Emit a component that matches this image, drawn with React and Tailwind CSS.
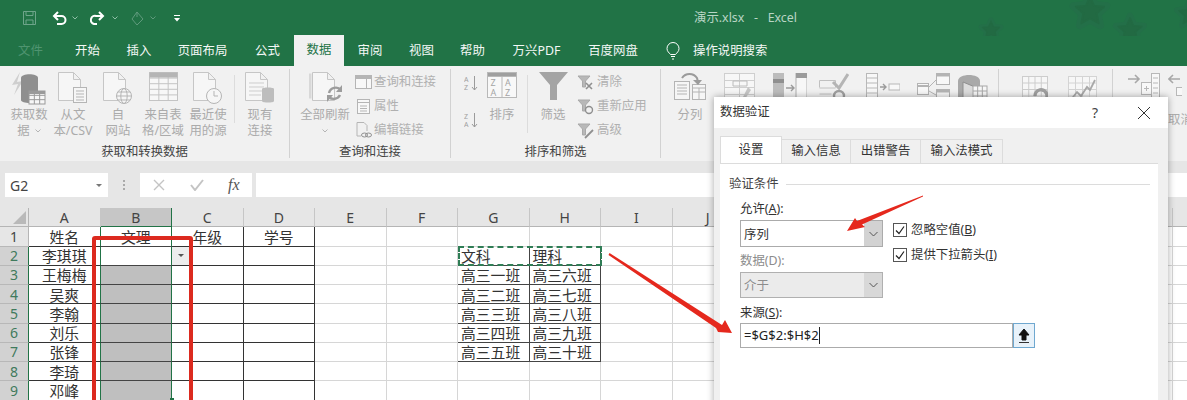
import React from "react";

const S = ({ w, h, c = "#c2c2c2", className = "", children }) => (
  <svg width={w} height={h} viewBox={`0 0 ${w} ${h}`} fill="none" stroke={c} strokeWidth="1" className={"shrink-0 " + className}>
    {children}
  </svg>
);

const Doc = ({ x = 0.5, y = 0.5, w = 22, h = 28, c = "#c6c6c6" }) => (
  <path d={`M${x} ${y}h${w - 7}l7 7v${h - 7}h-${w}z M${x + w - 7} ${y}v7h7`} stroke={c} fill="#f6f6f6" />
);

const Grid = ({ x, y, w, h, cols, rows, c = "#c4c4c4" }) => (
  <g stroke={c}>
    <rect x={x} y={y} width={w} height={h} fill="#f7f7f7" />
    {Array.from({ length: cols - 1 }, (_, i) => (
      <path key={"c" + i} d={`M${x + ((i + 1) * w) / cols} ${y}v${h}`} />
    ))}
    {Array.from({ length: rows - 1 }, (_, i) => (
      <path key={"r" + i} d={`M${x} ${y + ((i + 1) * h) / rows}h${w}`} />
    ))}
  </g>
);

const Big = ({ className, icon, lines = [] }) => (
  <div className={"flex flex-col items-center shrink-0 pt-[3px] " + className}>
    <div className="h-[35px] flex items-start justify-center">{icon}</div>
    {lines.map((l, i) => (
      <div key={i} className="h-[16px] leading-[16px] whitespace-nowrap text-[#ababab] flex items-center">{l}</div>
    ))}
  </div>
);

const Small = ({ icon, label, gap = "ml-[2px]" }) => (
  <div className="flex items-center h-[24px] text-[#b0b0b0] whitespace-nowrap">
    <div className="w-[17px] flex justify-center">{icon}</div>
    <span className={gap}>{label}</span>
  </div>
);

const Group = ({ className, label, children }) => (
  <div className={"flex flex-col shrink-0 border-r border-[#d2d2d2] " + className}>
    <div className="h-[75px] shrink-0 flex overflow-visible">{children}</div>
    <div className="text-center leading-[16px] h-[14px] text-[#444] whitespace-nowrap">{label}</div>
  </div>
);

const MiniFunnel = ({ children }) => (
  <S w={17} h={17} c="#a9a9a9">
    <path d="M1 2h12l-4.5 5v6h-3V7z" fill="#b8b8b8" />
    {children}
  </S>
);

const MiniChev = () => (
  <S w={6} h={4} c="#b5b5b5"><path d="M.5.5l2.5 2.5L5.5.5" /></S>
);

const icons = {
  get: (
    <S w={36} h={33}>
      <path d="M9 0L1 13l6-1-4 11 9-14-6 1z" fill="#cfcfcf" stroke="none" />
      <path d="M10 6c0-5 17-5 17 0v22c0 4-17 4-17 0z" fill="#8f8f8f" stroke="none" />
      <Grid x={18} y={19} w={16} h={13} cols={3} rows={3} c="#9a9a9a" />
      <rect x="18" y="19" width="16" height="3" fill="#9a9a9a" stroke="none" />
    </S>
  ),
  csv: (
    <S w={30} h={32}>
      <Doc />
      <rect x="15.5" y="15.5" width="13" height="15" fill="#f6f6f6" stroke="#b5b5b5" />
      <path d="M18 19h8M18 22h8M18 25h8M18 28h8" stroke="#b5b5b5" />
    </S>
  ),
  web: (
    <S w={30} h={33}>
      <Doc />
      <circle cx="21" cy="24" r="7.5" fill="#f6f6f6" stroke="#b5b5b5" />
      <ellipse cx="21" cy="24" rx="3.2" ry="7.5" stroke="#b5b5b5" />
      <path d="M13.5 24h15M15 20h12M15 28h12" stroke="#b5b5b5" />
    </S>
  ),
  table: (
    <S w={29} h={30}>
      <Grid x={0.5} y={0.5} w={28} h={28} cols={3} rows={5} />
      <rect x="0.5" y="0.5" width="28" height="5" fill="#b5b5b5" stroke="none" />
    </S>
  ),
  recent: (
    <S w={30} h={33}>
      <Doc />
      <circle cx="21" cy="24" r="7.5" fill="#f6f6f6" stroke="#b5b5b5" />
      <path d="M21 19v5h4" stroke="#b5b5b5" />
    </S>
  ),
  exist: (
    <S w={30} h={32}>
      <Doc />
      <path d="M4 11h15M4 15h15M4 19h15M4 23h12" stroke="#cdcdcd" />
      <path d="M17 17c0-2 12-2 12 0v12c0 2-12 2-12 0z" fill="#bdbdbd" stroke="none" />
    </S>
  ),
  refresh: (
    <S w={33} h={32}>
      <path d="M1 1.5v25" stroke="#d8d8d8" strokeWidth="3" />
      <Doc x={3.5} y={0.5} w={22} h={28} />
      <path d="M20 21a7 7 0 0 1 12-3M31 23a7 7 0 0 1-11 2" stroke="#9c9c9c" strokeWidth="2.4" />
      <path d="M33 13v7h-6zM18 30v-7h6z" fill="#9c9c9c" stroke="none" />
    </S>
  ),
  qTable: (
    <S w={17} h={15} c="#b5b5b5">
      <rect x="0.5" y="0.5" width="16" height="13" fill="#f8f8f8" />
      <rect x="0.5" y="0.5" width="16" height="3" fill="#b5b5b5" />
      <path d="M11.5 4v9" />
    </S>
  ),
  prop: (
    <S w={13} h={15} c="#b5b5b5">
      <rect x="0.5" y="0.5" width="12" height="14" fill="#f8f8f8" />
      <path d="M0.5 3.5h12M3 7h7M3 9.5h7M3 12h7" />
    </S>
  ),
  link: (
    <S w={16} h={16} c="#b5b5b5">
      <path d="M1 .5h7l3 3V9M1 .5V14h4" />
      <ellipse cx="8.5" cy="13" rx="3" ry="2" stroke="#8e8e8e" />
      <ellipse cx="12.5" cy="13" rx="3" ry="2" stroke="#8e8e8e" />
    </S>
  ),
  sortBox: (
    <S w={30} h={27} c="#b8b8b8">
      <rect x="0.5" y="0.5" width="29" height="25" fill="#f8f8f8" />
      <rect x="0.5" y="0.5" width="29" height="4" fill="#9f9f9f" />
      <path d="M15 4v22" />
      <text x="3.5" y="14" fontSize="9" fill="#a5a5a5" stroke="none">Z</text>
      <text x="3.5" y="24" fontSize="9" fill="#a5a5a5" stroke="none">A</text>
      <text x="18" y="14" fontSize="9" fill="#a5a5a5" stroke="none">A</text>
      <text x="18" y="24" fontSize="9" fill="#a5a5a5" stroke="none">Z</text>
    </S>
  ),
  funnel: (
    <S w={29} h={29}>
      <path d="M0 0h29L18 13v15h-7V13z" fill="#a4a4a4" stroke="none" />
    </S>
  ),
  split: (
    <S w={33} h={29} c="#b4b4b4">
      <rect x="0.5" y="9.5" width="15" height="18" fill="#f6f6f6" />
      <path d="M3 13h10M3 16h10M3 19h10M3 22h10" />
      <rect x="18.5" y="12.5" width="13" height="15" fill="#f6f6f6" />
      <path d="M18.5 16h13M18.5 20h13M25 16v11" />
      <path d="M8 6a9 9 0 0 1 15 0l1 4" stroke="#9b9b9b" strokeWidth="2" />
      <path d="M19 8h9l-4 5z" fill="#9b9b9b" stroke="none" />
    </S>
  ),
  fill: (
    <S w={31} h={30} c="#c6c6c6">
      <Grid x={0.5} y={0.5} w={30} h={28} cols={2} rows={4} c="#cfcfcf" />
      <path d="M9 8h14v5H9z" stroke="#bcbcbc" />
      <path d="M24 14l3 3-6 9h-3z" fill="#c6c6c6" stroke="none" />
    </S>
  ),
  dup: (
    <S w={34} h={28} c="#b0b0b0">
      <rect x="0" y="0" width="11" height="28" fill="#bcbcbc" stroke="none" />
      <rect x="0" y="6" width="11" height="4" fill="#8f8f8f" stroke="none" />
      <rect x="23" y="0" width="11" height="28" fill="#f7f7f7" stroke="#b0b0b0" />
      <rect x="23" y="0" width="11" height="5" fill="#9b9b9b" stroke="none" />
      <path d="M13 15h7M18 12l3 3-3 3" strokeWidth="1.4" stroke="#9a9a9a" />
    </S>
  ),
  valid: (
    <S w={30} h={28} c="#c0c0c0">
      <path d="M0.5 7.5h16M0.5 15h16M0.5 7.5v7M16.5 7.5v7M0.5 21h12" />
      <path d="M14 9l6 6L29 1" stroke="#b5b5b5" strokeWidth="3" />
      <circle cx="20" cy="23" r="5" stroke="#a0a0a0" strokeWidth="2.4" />
    </S>
  ),
  merge: (
    <S w={34} h={28} c="#b8b8b8">
      <rect x="0.5" y="0.5" width="11" height="27" fill="#f8f8f8" />
      <path d="M0.5 5h11M0.5 10h11M0.5 15h11M0.5 20h11" />
      <path d="M14 14h6M17 11l3 3-3 3" stroke="#9b9b9b" strokeWidth="1.4" />
      <rect x="23" y="11" width="11" height="6" fill="#f8f8f8" />
    </S>
  ),
  rel: (
    <S w={33} h={28} c="#b4b4b4">
      <rect x="0.5" y="10.5" width="11" height="11" fill="#f8f8f8" />
      <path d="M0.5 13h11" strokeWidth="2" />
      <rect x="19.5" y="0.5" width="13" height="11" fill="#f8f8f8" />
      <path d="M19.5 2h13" strokeWidth="3" />
      <rect x="19.5" y="16.5" width="13" height="11" fill="#f8f8f8" />
      <path d="M19.5 18h13" strokeWidth="3" />
      <path d="M12 14l7-7M12 18l7 4" />
    </S>
  ),
  model: (
    <S w={30} h={28}>
      <path d="M0 28V8C0 0 22 0 22 8v20z" fill="#a9a9a9" stroke="none" />
      <path d="M5 28V9l12 5v14" fill="#dcdcdc" stroke="#8f8f8f" />
      <Grid x={15} y={13} w={14} h={15} cols={3} rows={3} c="#a8a8a8" />
    </S>
  ),
  whatif: (
    <S w={26} h={28}>
      <Grid x={0.5} y={0.5} w={25} h={26} cols={4} rows={4} c="#cdcdcd" />
      <path d="M13 20a6 6 0 1 1 9 5l-3 3" stroke="#a0a0a0" strokeWidth="3.4" />
    </S>
  ),
  forecast: (
    <S w={29} h={28}>
      <Grid x={0.5} y={0.5} w={28} h={26} cols={4} rows={4} c="#d4d4d4" />
      <path d="M2 25l7-9 4 4 6-9 3 3 5-10" stroke="#a8a8a8" strokeWidth="1.8" />
    </S>
  ),
  group: (
    <S w={33} h={32} c="#b8b8b8">
      <path d="M1 6h11M8 2l4 4-4 4" stroke="#a8a8a8" strokeWidth="1.6" />
      <rect x="14.5" y="9.5" width="10" height="12" fill="#f8f8f8" />
      <path d="M17 15.5h5M19.5 13v5" />
      <rect x="24.5" y="0.5" width="8" height="30" fill="#f8f8f8" />
      <path d="M26 5h5M26 10h5M26 15h5M26 20h5M26 25h5" />
    </S>
  ),
  ungroup: (
    <S w={14} h={28} c="#b8b8b8">
      <path d="M12 6H2M5 2L1 6l4 4" stroke="#a8a8a8" strokeWidth="1.6" />
      <rect x="8.5" y="14.5" width="6" height="8" fill="#f8f8f8" />
    </S>
  ),
};

const colLetters = ["A", "B", "C", "D", "E", "F", "G", "H", "I", "J", "K", "L", "M", "N", "O", "P", ""];

const colA = ["姓名", "李琪琪", "王梅梅", "吴爽", "李翰", "刘乐", "张锋", "李琦", "邓峰"];
const colG = ["文科", "高三一班", "高三二班", "高三三班", "高三四班", "高三五班"];
const colH = ["理科", "高三六班", "高三七班", "高三八班", "高三九班", "高三十班"];

function cellClass(row, col) {
  if (col === 0) return "border-r border-b border-r-[#217346] border-b-[#333] justify-center";
  if (col === 1) {
    const base = "border-r border-b border-r-[#217346] border-b-[#444] justify-center";
    return row >= 3 ? base + " bg-[#bfbfbf]" : base;
  }
  if (col === 2 || col === 3) return "border-r border-b border-r-[#333] border-b-[#333] justify-center";
  if ((col === 6 || col === 7) && row >= 2 && row <= 7) return "border-r border-b border-r-[#444] border-b-[#444] pl-[3px]";
  return "border-r border-b border-r-[#d6d6d6] border-b-[#d6d6d6]";
}

function cellText(row, col) {
  if (col === 0) return colA[row - 1];
  if (col === 1 && row === 1) return "文理";
  if (col === 2 && row === 1) return "年级";
  if (col === 3 && row === 1) return "学号";
  if (col === 6 && row >= 2 && row <= 7) return colG[row - 2];
  if (col === 7 && row >= 2 && row <= 7) return colH[row - 2];
  return "";
}

const Sheet = () => (
  <div className="relative flex-1 overflow-hidden bg-white">
    <div className="grid grid-cols-[29px_repeat(17,71.5px)] auto-rows-[19.25px] w-[1245px] text-[14.8px] text-[#333]">
      <div className="h-[19px] bg-[#e6e6e6] border-r border-b border-[#b5b5b5] flex justify-end items-end pr-[2px] pb-[2px]">
        <div className="w-0 h-0 border-l-[13px] border-l-transparent border-b-[13px] border-b-[#b9b9b9]" />
      </div>
      {colLetters.map((l, i) => (
        <div
          key={i}
          className={
            "h-[19px] flex items-center justify-center text-[14px] text-[#444] border-r " +
            (l === "B"
              ? "bg-[#c6c6c6] border-r-[#217346] border-b border-b-[#217346]"
              : "bg-[#e6e6e6] border-r-[#c6c6c6] border-b border-b-[#b5b5b5]")
          }
        >
          {l}
        </div>
      ))}
      {[1, 2, 3, 4, 5, 6, 7, 8, 9].map((row) => (
        <React.Fragment key={row}>
          <div
            className={
              "flex items-center justify-center text-[14px] border-b border-b-[#b8b8b8] border-r " +
              (row === 1
                ? "bg-[#e6e6e6] text-[#444] border-r-[#b5b5b5]"
                : "bg-[#d2d2d2] text-[#3f7a5c] border-r-[#217346]")
            }
          >
            {row}
          </div>
          {colLetters.map((_, col) => (
            <div key={col} className={"flex items-center whitespace-nowrap overflow-hidden " + cellClass(row, col)}>
              {row === 2 && col === 2 ? (
                <div className="w-[17px] h-full mr-auto bg-[#ededed] flex items-center justify-center">
                  <div className="w-0 h-0 border-x-[3px] border-x-transparent border-t-[3px] border-t-[#555]" />
                </div>
              ) : cellText(row, col) ? (
                <span className="pt-[2px] leading-[17px]">{cellText(row, col)}</span>
              ) : null}
            </div>
          ))}
        </React.Fragment>
      ))}
    </div>
    <div className="absolute left-[458px] top-[38px] w-[144px] h-[20px] border-2 border-dashed border-[#2f7d55]" />
    <div className="absolute left-[170px] top-[190px] w-[4px] h-[4px] bg-[#217346]" />
  </div>
);

const Check = ({ label }) => (
  <div className="flex items-center h-[14px]">
    <div className="w-[14px] h-[14px] bg-white border border-[#555] flex items-center justify-center">
      <S w={12} h={12} c="#222"><path d="M2 6.5l3 3 5-7" strokeWidth="1.2" /></S>
    </div>
    <span className="ml-[4px] whitespace-nowrap text-[#333]">{label}</span>
  </div>
);

const Chevron = () => (
  <S w={9} h={6} c="#555"><path d="M.5 1l4 4 4-4" /></S>
);

const Dialog = () => (
  <div className="absolute left-[714px] top-[97px] w-[454px] h-[320px] z-20 bg-[#f0f0f0] shadow-[0_0_7px_rgba(0,0,0,0.35)] text-[#333]">
    <div className="h-[31px] bg-white flex items-center pl-[6px] pr-[17px]">
      <span>数据验证</span>
      <span className="ml-auto text-[14px] text-[#444]">?</span>
      <S w={14} h={14} c="#333" className="ml-[39px]"><path d="M1 1l12 12M13 1L1 13" /></S>
    </div>
    <div className="flex items-end ml-[6px] mt-[8px] h-[27px]">
      <div className="w-[62px] h-[27px] bg-white border-x border-t border-[#dcdcdc] flex items-center justify-center">设置</div>
      <div className="w-[69px] h-[24px] border-r border-t border-[#dcdcdc] flex items-center justify-center">输入信息</div>
      <div className="w-[70px] h-[24px] border-r border-t border-[#dcdcdc] flex items-center justify-center">出错警告</div>
      <div className="w-[82px] h-[24px] border-r border-t border-[#dcdcdc] flex items-center justify-center">输入法模式</div>
    </div>
    <div className="ml-[6px] mr-[10px] h-[260px] bg-white border-t border-[#dcdcdc] pt-[12px]">
      <div className="flex items-center pl-[9px] pr-[8px] h-[16px]">
        <span className="text-[#444]">验证条件</span>
        <div className="flex-1 h-px bg-[#dcdcdc] ml-[7px]" />
      </div>
      <div className="flex ml-[20px] mt-[8px]">
        <div className="w-[143px]">
          <div className="leading-[18px] h-[16px]">允许(<u>A</u>):</div>
          <div className="mt-[4px] h-[27px] border border-[#ababab] flex items-center">
            <span className="pl-[3px] pt-[3px] flex-1">序列</span>
            <div className="w-[18px] h-full bg-[#d2d2d2] flex items-center justify-center"><Chevron /></div>
          </div>
          <div className="mt-[5px] leading-[18px] h-[16px] text-[#8c8c8c]">数据(D):</div>
          <div className="mt-[4px] h-[26px] border border-[#b0b0b0] bg-[#ebebeb] flex items-center">
            <span className="pl-[3px] pt-[2px] flex-1 text-[#8c8c8c]">介于</span>
            <div className="w-[18px] h-full bg-[#d8d8d8] flex items-center justify-center"><Chevron /></div>
          </div>
        </div>
        <div className="ml-[10px] pt-[23px] flex flex-col gap-[11px]">
          <Check label={<>忽略空值(<u>B</u>)</>} />
          <Check label={<>提供下拉箭头(<u>I</u>)</>} />
        </div>
      </div>
      <div className="ml-[20px] mt-[6px] leading-[18px] h-[16px]">来源(<u>S</u>):</div>
      <div className="ml-[20px] mt-[3px] flex h-[25px]">
        <div className="w-[273px] border border-[#ababab] flex items-center pl-[3px] text-[13px] text-[#222]">
          =$G$2:$H$2<span className="w-px h-[17px] bg-[#222]" />
        </div>
        <div className="w-[22px] border border-[#6fa8d0] bg-[#e8f2fa] flex items-center justify-center">
          <S w={12} h={15} c="#111">
            <path d="M6 1l5 6H8v5H4V7H1z" fill="#111" />
            <path d="M1 14.5h10" stroke="#333" />
          </S>
        </div>
      </div>
    </div>
  </div>
);

const STAR = "0,-.95 .27,-.34 .92,-.28 .44,.16 .57,.8 0,.48 -.57,.8 -.44,.16 -.92,-.28 -.27,-.34";

const Star = ({ x, y, r }) => (
  <g transform={`translate(${x} ${y}) scale(${r})`} strokeLinejoin="round">
    <polygon points={STAR} fill="#236f48" stroke="#236f48" strokeWidth=".42" />
    <polygon points={STAR} fill="#226a43" stroke="#226a43" strokeWidth=".12" transform="scale(.85)" />
  </g>
);

const tabs = [
  ["文件", "w-[61px] text-[#4f9470]"],
  ["开始", "w-[53px]"],
  ["插入", "w-[50px]"],
  ["页面布局", "w-[77px]"],
  ["公式", "w-[53px]"],
  ["数据", "w-[50px] h-[31px] bg-[#f1f1f1] text-[#217346]"],
  ["审阅", "w-[52px]"],
  ["视图", "w-[51px]"],
  ["帮助", "w-[51px]"],
  ["万兴PDF", "w-[77px]"],
  ["百度网盘", "w-[76px]"],
];

export default function App() {
  return (
    <div className="relative w-[1187px] h-[400px] overflow-hidden flex flex-col bg-white text-[12.4px] font-['Noto_Sans','Noto_Sans_CJK_SC',sans-serif]">
      {/* title bar */}
      <div className="relative h-[36px] bg-[#217346] flex items-center pl-[23px] shrink-0">
        <svg width="1187" height="66" className="absolute left-0 top-0">
          <Star x={991} y={30} r={11} />
          <Star x={1090} y={11} r={18} />
          <Star x={1130} y={30} r={15} />
          <Star x={1190} y={14} r={14} />
        </svg>
        <S w={13} h={14} c="#6ea58a" className="relative">
          <path d="M.5.5h12v13H.5zM3 .5v4h7v-4M3 13.5V9h7v4.5" />
        </S>
        <S w={15} h={15} c="#fff" className="relative ml-[16px]">
          <path d="M2 5h7.5a4 4 0 0 1 0 8H5" strokeWidth="2" />
          <path d="M6 1L2 5l4 4" strokeWidth="2" />
        </S>
        <S w={6} h={4} c="#8fbea6" className="relative ml-[5px]"><path d="M.5.5l2.5 2.5L5.5.5" /></S>
        <S w={15} h={15} c="#fff" className="relative ml-[12px]">
          <path d="M13 5H6a4 4 0 0 0-2 8h3" strokeWidth="2" />
          <path d="M9 1l4 4-4 4" strokeWidth="2" />
        </S>
        <S w={6} h={4} c="#8fbea6" className="relative ml-[7px]"><path d="M.5.5l2.5 2.5L5.5.5" /></S>
        <S w={14} h={15} c="#5f9a7c" className="relative ml-[12px]">
          <path d="M7 1L2 8l5 6 6-6zM7 1v5" />
        </S>
        <S w={6} h={4} c="#5f9a7c" className="relative ml-[6px]"><path d="M.5.5l2.5 2.5L5.5.5" /></S>
        <S w={8} h={7} c="#fff" className="relative ml-[17px]">
          <path d="M1 .5h6" />
          <path d="M1 3h6L4 6.5z" fill="#fff" stroke="none" />
        </S>
        <span className="relative ml-[513px] text-[#b9d5c5] whitespace-pre">演示.xlsx   -   Excel</span>
      </div>

      {/* tabs */}
      <div className="relative h-[30px] bg-[#217346] flex items-end shrink-0 text-[#f4f8f6]">
        {tabs.map(([t, c]) => (
          <div key={t} className={"h-[30px] flex items-center justify-center shrink-0 " + c}>{t}</div>
        ))}
        <div className="h-[30px] flex items-center ml-[15px]">
          <S w={14} h={18} c="#fff">
            <path d="M4.5 12.5C3 10.5 1 9.5 1 6.5a6 6 0 0 1 12 0c0 3-2 4-3.5 6zM5 14.5h4M6 17h2" />
          </S>
          <span className="ml-[13px]">操作说明搜索</span>
        </div>
      </div>

      {/* ribbon */}
      <div className="h-[95px] bg-[#f1f1f1] flex py-[3px] shrink-0 overflow-hidden">
        <Group className="w-[290px]" label="获取和转换数据">
          <Big className="w-[44px] ml-[7px]" icon={icons.get} lines={["获取数", <>据<span className="ml-[5px]"><MiniChev /></span></>]} />
          <Big className="w-[44px]" icon={icons.csv} lines={["从文", "本/CSV"]} />
          <Big className="w-[46px]" icon={icons.web} lines={["自", "网站"]} />
          <Big className="w-[44px]" icon={icons.table} lines={["来自表", "格/区域"]} />
          <Big className="w-[46px]" icon={icons.recent} lines={["最近使", "用的源"]} />
          <div className="w-px h-[48px] mt-[6px] ml-[3px] bg-[#dcdcdc]" />
          <Big className="w-[44px] ml-[3px]" icon={icons.exist} lines={["现有", "连接"]} />
        </Group>
        <Group className="w-[161px]" label="查询和连接">
          <Big className="w-[50px] ml-[10px]" icon={icons.refresh} lines={["全部刷新", <MiniChev />]} />
          <div className="ml-[5px] pt-[1px]">
            <Small icon={icons.qTable} label="查询和连接" />
            <Small icon={icons.prop} label="属性" />
            <Small icon={icons.link} label="编辑链接" />
          </div>
        </Group>
        <Group className="w-[210px]" label="排序和筛选">
          <div className="w-[14px] ml-[13px] pt-[6px] flex flex-col gap-[20px]">
            <S w={14} h={17} c="#9b9b9b">
              <text x="0" y="7" fontSize="7" fill="#a0a0a0" stroke="none">A</text>
              <text x="0" y="15" fontSize="7" fill="#a0a0a0" stroke="none">Z</text>
              <path d="M10.5 1v14M8 12l2.5 3 2.5-3" />
            </S>
            <S w={14} h={17} c="#9b9b9b">
              <text x="0" y="7" fontSize="7" fill="#a0a0a0" stroke="none">Z</text>
              <text x="0" y="15" fontSize="7" fill="#a0a0a0" stroke="none">A</text>
              <path d="M10.5 1v14M8 12l2.5 3 2.5-3" />
            </S>
          </div>
          <Big className="w-[40px] ml-[4px]" icon={icons.sortBox} lines={["排序"]} />
          <div className="w-px h-[58px] mt-[6px] ml-[5px] bg-[#dcdcdc]" />
          <Big className="w-[40px] ml-[5px]" icon={icons.funnel} lines={["筛选"]} />
          <div className="ml-[4px] pt-[1px]">
            <Small
              gap="ml-[3px]"
              icon={<MiniFunnel><path d="M9 9l6 6M15 9l-6 6" stroke="#8f8f8f" strokeWidth="1.6" /></MiniFunnel>}
              label="清除"
            />
            <Small
              gap="ml-[3px]"
              icon={<MiniFunnel><circle cx="12" cy="12" r="3.5" stroke="#8f8f8f" strokeWidth="1.4" /></MiniFunnel>}
              label="重新应用"
            />
            <Small
              gap="ml-[3px]"
              icon={<MiniFunnel><path d="M8 16l8-8" stroke="#8f8f8f" strokeWidth="1.8" /></MiniFunnel>}
              label="高级"
            />
          </div>
        </Group>
        <Group className="w-[338px]" label="">
          <Big className="w-[42px] ml-[8px]" icon={icons.split} lines={["分列"]} />
          <div className="flex items-start pt-[4px]">
            <div className="ml-[13px]">{icons.fill}</div>
            <div className="ml-[18px]">{icons.dup}</div>
            <div className="ml-[12px]">{icons.valid}</div>
            <div className="ml-[17px]">{icons.merge}</div>
            <div className="ml-[17px]">{icons.rel}</div>
            <div className="ml-[8px]">{icons.model}</div>
          </div>
        </Group>
        <Group className="w-[114px]" label="">
          <div className="flex items-start pt-[7px]">
            <div className="ml-[23px]">{icons.whatif}</div>
            <div className="ml-[20px]">{icons.forecast}</div>
          </div>
        </Group>
        <div className="flex flex-col shrink-0 pt-[4px] ml-[14px]">
          <div className="flex items-start">
            {icons.group}
            <div className="ml-[8px]">{icons.ungroup}</div>
          </div>
          <div className="ml-[41px] mt-[7px] leading-[16px] text-[#ababab] whitespace-nowrap">取消</div>
        </div>
      </div>

      {/* formula bar */}
      <div className="h-[47px] bg-[#e6e6e6] flex pt-[12px] pl-[5px] shrink-0">
        <div className="w-[103px] h-[24px] bg-white flex items-center pl-[5px] text-[14px] text-[#444]">
          G2
          <div className="ml-auto mr-[6px] w-0 h-0 border-x-[3px] border-x-transparent border-t-[3px] border-t-[#777]" />
        </div>
        <div className="w-[32px] h-[24px] flex flex-col items-center justify-center gap-[2px]">
          <div className="w-[2px] h-[2px] bg-[#aaa]" />
          <div className="w-[2px] h-[2px] bg-[#aaa]" />
          <div className="w-[2px] h-[2px] bg-[#aaa]" />
        </div>
        <div className="w-[112px] h-[24px] bg-white flex items-center pl-[12px]">
          <S w={14} h={12} c="#c4c4c4"><path d="M2 1l10 10M12 1L2 11" strokeWidth="1.4" /></S>
          <S w={14} h={12} c="#c4c4c4" className="ml-[24px]"><path d="M1 6l4 5 8-10" strokeWidth="2" /></S>
          <span className="ml-[24px] italic text-[16px] text-[#555] font-['Liberation_Serif',serif]">fx</span>
        </div>
        <div className="ml-[4px] flex-1 h-[24px] bg-white" />
      </div>

      <Sheet />

      {/* annotations */}
      <div className="absolute left-[92px] top-[236px] w-[101px] h-[190px] border-[4px] border-[#dc2a1f] rounded-[3px] z-10" />
      <Dialog />
      <svg width="1187" height="400" className="absolute left-0 top-0 z-30 pointer-events-none">
        <polygon points="609.5,253 722,325 725,320 732,333 718,332 716,328 608.5,255" fill="#e5281d" />
        <polygon points="923,195.5 857,221 855,218 847,231 865,227 862,224.5 923,196.5" fill="#e5281d" />
      </svg>
    </div>
  );
}
